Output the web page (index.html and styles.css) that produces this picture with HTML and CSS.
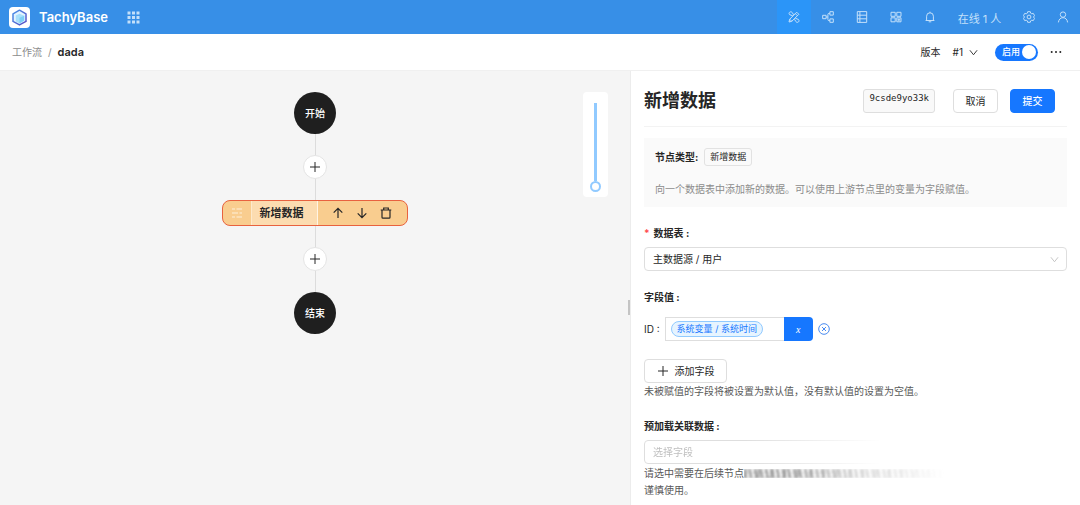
FILE: index.html
```html
<!DOCTYPE html>
<html lang="zh-CN">
<head>
<meta charset="utf-8">
<meta name="viewport" content="width=device-width, initial-scale=1">
<title>TachyBase</title>
<link rel="stylesheet" href="styles.css">
</head>
<body>
<header class="topbar">
  <a class="brand" href="#">
    <svg class="logo" viewBox="0 0 21 21" aria-hidden="true">
      <defs>
        <linearGradient id="edge" x1="0" y1="0" x2="1" y2="1"><stop offset="0" stop-color="#4a92e8"/><stop offset="1" stop-color="#5b4fc4"/></linearGradient>
      </defs>
      <rect width="21" height="21" rx="4" fill="#fff"/>
      <path d="M10.500 3.200 17 6.800v7.600l-6.500 3.500L4 14.400V6.800z" fill="#e3f4ff" stroke="url(#edge)" stroke-width="1.500" stroke-linejoin="round"/>
      <path d="M6.800 8.600 10.500 6.700l4.700 2v4.900l-4.700 3-3.700-2.400z" fill="#a9e0fb"/>
      <path d="m10.500 10.800 4.700-2.100v4.900l-4.700 3z" fill="#7dd0f7"/>
    </svg>
    <span>TachyBase</span>
  </a>
  <button class="icon-btn apps" aria-label="应用">
    <svg width="13" height="13" viewBox="0 0 13 13" fill="currentColor"><path d="M.5.500h3v3h-3zM5 .500h3v3H5zM9.500.500h3v3h-3zM.5 5h3v3h-3zM5 5h3v3H5zM9.500 5h3v3h-3zM.5 9.500h3v3h-3zM5 9.500h3v3H5zM9.500 9.500h3v3h-3z"/></svg>
  </button>
  <nav class="tools" aria-label="工具">
    <button class="icon-btn active" aria-label="界面配置"><svg class="ico" viewBox="0 0 12 12"><path d="M4.800 4.800 1.500 3.600c-.7-.9-.5-1.900.2-2.400.8-.6 1.900-.5 2.500.3L5.600 3.800M7.300 7.200l3.200 1.300c.8.900.6 1.900-.1 2.500-.8.600-1.900.4-2.500-.4L6.500 8.300M1 11l.7-2.800 7-7 2.100 2.100-7 7zM7.300 2.600l2.100 2.100M1.700 8.200l2.100 2.100"/></svg></button>
    <button class="icon-btn" aria-label="工作流"><svg class="ico" viewBox="0 0 12 12"><path d="M.7 4.300h3.400v3.400H.7zM7.900.7h3.400v3.400H7.900zM7.900 7.900h3.400v3.400H7.900zM4.100 6h1.800M7.900 2.400H7c-.8 0-1.100.4-1.100 1.100v5c0 .7.300 1.100 1.100 1.100h.9"/></svg></button>
    <button class="icon-btn" aria-label="数据源"><svg class="ico" viewBox="0 0 12 12"><path d="M1.300.6h9.400v10.800H1.300zM1.300 4.200h9.400M1.300 7.800h9.400M3.900.6v10.800"/></svg></button>
    <button class="icon-btn" aria-label="插件"><svg class="ico" viewBox="0 0 12 12"><path d="M1 1.300h4.200v4H1zM6.800 1.300H11v4H6.800zM1 6.800h4.200v4H1zM6.800 6.800H11v4H6.800zM8.900 7.500v2.600M7.600 8.800h2.600"/></svg></button>
    <button class="icon-btn" aria-label="通知"><svg class="ico" viewBox="0 0 12 12"><path d="M1.600 9.500h8.800M2.600 9.500V5.200a3.400 3.400 0 0 1 6.800 0v4.300M6 1.800V.7M4.700 10.800h2.600"/></svg></button>
    <button class="icon-btn online">在线 1 人</button>
    <button class="icon-btn" aria-label="设置"><svg class="ico" viewBox="0 0 12 12"><path d="m4.700.7-.4 1.500-1.100.6-1.500-.4L.5 4.600 1.500 6 .5 7.400l1.200 2.200 1.500-.4 1.100.6.4 1.500h2.600l.4-1.500 1.100-.6 1.500.4 1.200-2.200-1-1.400 1-1.400-1.200-2.200-1.500.4-1.100-.6L7.300.7z"/><circle cx="6" cy="6" r="1.900"/></svg></button>
    <button class="icon-btn" aria-label="用户"><svg class="ico" viewBox="0 0 12 12"><circle cx="6" cy="3.600" r="2.700"/><path d="M1.400 11.400C1.700 8.500 3.500 6.700 6 6.700s4.300 1.800 4.600 4.700"/></svg></button>
  </nav>
</header>

<div class="subbar">
  <nav class="crumbs" aria-label="路径"><a href="#">工作流</a><span class="sep">/</span><strong>dada</strong></nav>
  <div class="actions">
    <span>版本</span>
    <button class="version">#1 <svg class="chev" viewBox="0 0 10 10"><path d="m1 2.500 4 5 4-5"/></svg></button>
    <label class="switch"><input type="checkbox" role="switch" checked aria-label="启用"><span class="switch-text">启用</span><span class="knob"></span></label>
    <button class="more" aria-label="更多"><svg width="12" height="4" viewBox="0 0 12 4" fill="currentColor"><circle cx="1.700" cy="2" r="1"/><circle cx="6" cy="2" r="1"/><circle cx="10.300" cy="2" r="1"/></svg></button>
  </div>
</div>

<main class="workspace">
  <section class="canvas" aria-label="流程">
    <div class="flow">
      <div class="terminal">开始</div>
      <div class="line"></div>
      <button class="add" aria-label="添加节点"><svg viewBox="0 0 12 12"><path d="M6 1v10M1 6h10"/></svg></button>
      <div class="line"></div>
      <div class="node">
        <span class="grip"><svg viewBox="0 0 12 12"><path d="M1 2h3M5.500 2H11M1 6h6M8.500 6H11M1 10h3M5.500 10H11"/></svg></span>
        <span class="node-name">新增数据</span>
        <span class="node-tools">
          <button aria-label="上移"><svg viewBox="0 0 12 12"><path d="M6 11V1.500M1.700 5.700 6 1.300l4.300 4.400"/></svg></button>
          <button aria-label="下移"><svg viewBox="0 0 12 12"><path d="M6 1v9.500M1.700 6.300 6 10.700l4.300-4.400"/></svg></button>
          <button aria-label="删除"><svg viewBox="0 0 12 12"><path d="M.7 3h10.600M3.700 3V1h4.600v2M2 3v7.200c0 .6.300.9.900.9h6.200c.6 0 .9-.3.900-.9V3"/></svg></button>
        </span>
      </div>
      <div class="line"></div>
      <button class="add" aria-label="添加节点"><svg viewBox="0 0 12 12"><path d="M6 1v10M1 6h10"/></svg></button>
      <div class="line"></div>
      <div class="terminal">结束</div>
    </div>
    <div class="zoom"><input type="range" min="0" max="100" value="0" aria-label="缩放"></div>
    <div class="handle"></div>
  </section>

  <form class="panel">
    <div class="panel-head">
      <h1>新增数据</h1>
      <code>9csde9yo33k</code>
      <button type="button" class="btn">取消</button>
      <button type="button" class="btn primary">提交</button>
    </div>
    <div class="info">
      <div class="kind"><strong>节点类型:</strong><span class="tag">新增数据</span></div>
      <p>向一个数据表中添加新的数据。可以使用上游节点里的变量为字段赋值。</p>
    </div>

    <div class="field">
      <label class="label" for="table"><span class="req">*</span>数据表 :</label>
      <div class="select"><select id="table"><option>主数据源 / 用户</option></select><svg class="chev" viewBox="0 0 10 10"><path d="m1 2.500 4 5 4-5"/></svg></div>
    </div>

    <div class="field values">
      <div class="label">字段值 :</div>
      <div class="assign">
        <span id="id-label">ID :</span>
        <div class="var-input"><div class="var-box" role="textbox" tabindex="0" aria-labelledby="id-label"><span class="var">系统变量 / 系统时间</span></div><button type="button" class="var-btn" aria-label="选择变量">x</button></div>
        <button type="button" class="clear" aria-label="移除"><svg viewBox="0 0 12 12"><circle cx="6" cy="6" r="5.300"/><path d="m4 4 4 4M8 4 4 8"/></svg></button>
      </div>
      <button type="button" class="btn add-field"><svg viewBox="0 0 12 12"><path d="M6 1v10M1 6h10"/></svg>添加字段</button>
      <p class="hint">未被赋值的字段将被设置为默认值，没有默认值的设置为空值。</p>
    </div>

    <div class="field preload">
      <label class="label" for="preload">预加载关联数据 :</label>
      <div class="select faded"><select id="preload" class="empty"><option>选择字段</option></select></div>
      <p class="hint"><span class="hint-line">请选中需要在后续节点<span class="smudge"></span></span>谨慎使用。</p>
    </div>
  </form>
</main>
</body>
</html>
```
FILE: styles.css
```css
* { box-sizing: border-box; }

body {
  margin: 0;
  min-height: 100vh;
  display: flex;
  flex-direction: column;
  background: #fff;
  color: #262626;
  font: 10px/16px Inter, "Noto Sans CJK SC", sans-serif;
}

button, select, input { font: inherit; color: inherit; }
button { padding: 0; border: 0; background: none; cursor: pointer; }
a { color: inherit; text-decoration: none; }
p, h1 { margin: 0; }
svg { display: block; flex: none; }

.topbar {
  display: flex;
  align-items: stretch;
  height: 34px;
  padding-left: 9px;
  background: #378fe7;
  color: #fff;
}
.brand { display: flex; align-items: center; gap: 9px; font-size: 13px; font-weight: 600; }
.logo { width: 21px; height: 21px; }
.icon-btn { display: flex; align-items: center; justify-content: center; width: 34px; color: #c4e0fa; }
.apps { margin-left: 9px; }
.tools { display: flex; margin-left: auto; }
.tools .active { background: #2b95f8; }
.online { width: 65px; padding-top: 4px; font-size: 11px; }
.ico { width: 12px; height: 12px; fill: none; stroke: currentColor; stroke-width: 1; stroke-linejoin: round; }

.subbar {
  display: flex;
  align-items: center;
  justify-content: space-between;
  height: 37px;
  padding: 0 18px 0 12px;
  border-bottom: 1px solid #f0f0f0;
}
.crumbs { display: flex; gap: 6px; color: #8c8c8c; }
.crumbs strong { color: #262626; font-size: 11px; font-weight: 600; }
.actions { display: flex; align-items: center; gap: 12px; }
.version { display: flex; align-items: center; gap: 6px; }
.chev { width: 9px; height: 9px; fill: none; stroke: currentColor; stroke-width: 1; }
.switch {
  display: flex;
  align-items: center;
  justify-content: space-between;
  width: 43px;
  height: 17px;
  margin-left: 5px;
  padding: 0 2px 0 7px;
  border-radius: 9px;
  background: #1677ff;
  color: #fff;
  font-size: 9px;
  font-weight: 500;
  cursor: pointer;
}
.switch input { position: absolute; opacity: 0; width: 1px; height: 1px; margin: 0; }
.knob { width: 14px; height: 14px; border-radius: 50%; background: #fff; }

.workspace { flex: 1; display: grid; grid-template-columns: 7fr 5fr; }

.canvas { position: relative; padding: 21px 0; background: #f5f5f5; }
.flow { display: flex; flex-direction: column; align-items: center; }
.terminal {
  display: grid;
  place-items: center;
  width: 42px;
  height: 42px;
  border-radius: 50%;
  background: #1f1f1f;
  color: #fff;
  font-weight: 500;
}
.line { width: 1px; height: 21px; background: #dcdcdc; }
.add {
  display: grid;
  place-items: center;
  width: 24px;
  height: 24px;
  border: 1px solid #e4e4e4;
  border-radius: 50%;
  background: #fff;
}
.add svg, .node svg, .add-field svg { width: 12px; height: 12px; fill: none; stroke: currentColor; stroke-width: 1; }
.node {
  display: flex;
  width: 186px;
  height: 26px;
  overflow: hidden;
  border: 1px solid #e8623f;
  border-radius: 8px;
  background: #f9cd8f;
}
.grip { display: grid; place-items: center; width: 28px; color: #fdf0da; }
.node-name {
  display: grid;
  place-items: center;
  width: 67px;
  padding-right: 6px;
  border-left: 1px solid #fde9cc;
  border-right: 1px solid #fff4e4;
  background: #fcdcb0;
  font-size: 11px;
  font-weight: 700;
}
.node-tools { display: flex; align-items: center; gap: 12px; padding-left: 14px; }
.node-tools svg { stroke-width: 1.2; }

.zoom {
  position: absolute;
  top: 21px;
  right: 22px;
  display: flex;
  justify-content: center;
  width: 25px;
  height: 105px;
  padding: 5px 0;
  border-radius: 4px;
  background: #fff;
}
.zoom input {
  appearance: none;
  width: 11px;
  height: 95px;
  margin: 0;
  background: linear-gradient(#91caff, #91caff) center 6px / 3px 78px no-repeat;
  writing-mode: vertical-lr;
  direction: rtl;
}
.zoom input::-webkit-slider-runnable-track { width: 11px; height: 100%; background: none; }
.zoom input::-webkit-slider-thumb {
  appearance: none;
  width: 11px;
  height: 11px;
  border: 2px solid #91caff;
  border-radius: 50%;
  background: #fff;
}
.handle { position: absolute; right: 0; top: 229px; width: 2px; height: 15px; background: #c4c4c4; }

.panel { min-width: 0; padding: 0 13px 8px; border-left: 1px solid #ececec; }
.panel-head {
  display: flex;
  align-items: center;
  height: 56px;
  padding: 5px 12px 0 0;
  border-bottom: 1px solid #f3f3f3;
}
h1 { flex: 1; font-size: 18px; line-height: 24px; font-weight: 700; }
code {
  height: 24px;
  margin-right: 18px;
  padding: 0 5px;
  border: 1px solid #dedede;
  border-radius: 3px;
  background: #f9f9f9;
  font: 9px/16px "DejaVu Sans Mono", monospace;
}
.btn {
  display: flex;
  align-items: center;
  justify-content: center;
  width: 45px;
  height: 24px;
  border: 1px solid #dedede;
  border-radius: 4px;
  background: #fff;
}
.primary { margin-left: 12px; border-color: #1677ff; background: #1677ff; color: #fff; font-weight: 500; }

.info { display: flex; flex-direction: column; gap: 15px; height: 69px; margin-top: 11px; padding: 10px 11px; background: #fafafa; }
.kind { display: flex; align-items: center; gap: 6px; height: 18px; }
.tag { padding: 0 5px; border: 1px solid #e2e2e2; border-radius: 3px; font-size: 9px; }
.info p { color: #8c8c8c; }

.field { margin-top: 18px; }
.label { display: block; margin-bottom: 6px; font-weight: 700; }
.req { margin-right: 4px; color: #ff4d4f; }
.select { position: relative; display: flex; }
.select select {
  appearance: none;
  width: 100%;
  height: 24px;
  padding: 0 8px;
  border: 1px solid #dedede;
  border-radius: 4px;
  background: #fff;
}
.select .chev { position: absolute; right: 8px; top: 8px; color: #bfbfbf; pointer-events: none; }
.select .empty { color: #bfbfbf; }

.values .label { margin-bottom: 12px; }
.assign { display: flex; align-items: center; gap: 5px; }
.var-input { display: flex; width: 148px; height: 24px; }
.var-box { flex: 1; display: flex; align-items: center; padding: 0 5px; border: 1px solid #dedede; border-right: 0; }
.var {
  padding: 0 5px;
  border: 1px solid #91caff;
  border-radius: 8px;
  background: #e6f4ff;
  color: #1677ff;
  font-size: 9px;
  line-height: 14px;
  white-space: nowrap;
}
.var-btn { width: 29px; border-radius: 0 4px 4px 0; background: #1677ff; color: #fff; font: italic 10px "Liberation Serif", serif; }
.clear { color: #4a8bf0; }
.clear svg { width: 12px; height: 12px; fill: none; stroke: currentColor; stroke-width: 1; }
.add-field { gap: 6px; width: 83px; margin-top: 18px; }
.hint { color: #595959; line-height: 17px; }

.preload .label { margin-bottom: 6px; }
.faded { mask-image: linear-gradient(90deg, #000 24%, transparent 56%); }
.preload .hint { padding-top: 1px; }
.hint-line { display: flex; align-items: center; }
.smudge {
  flex: 1;
  height: 9px;
  background:
    repeating-linear-gradient(80deg, #777a 0 2px, #fff0 3px 5px, #888a 6px 8px, #fff0 9px 11px),
    repeating-linear-gradient(95deg, #8888 0 3px, #fff0 4px 13px),
    repeating-linear-gradient(0deg, #bbb5 0 2px, #fff0 2px 4px);
  filter: blur(1px);
  mask-image: linear-gradient(90deg, #000 15%, #0006 36%, transparent 62%);
}
```
